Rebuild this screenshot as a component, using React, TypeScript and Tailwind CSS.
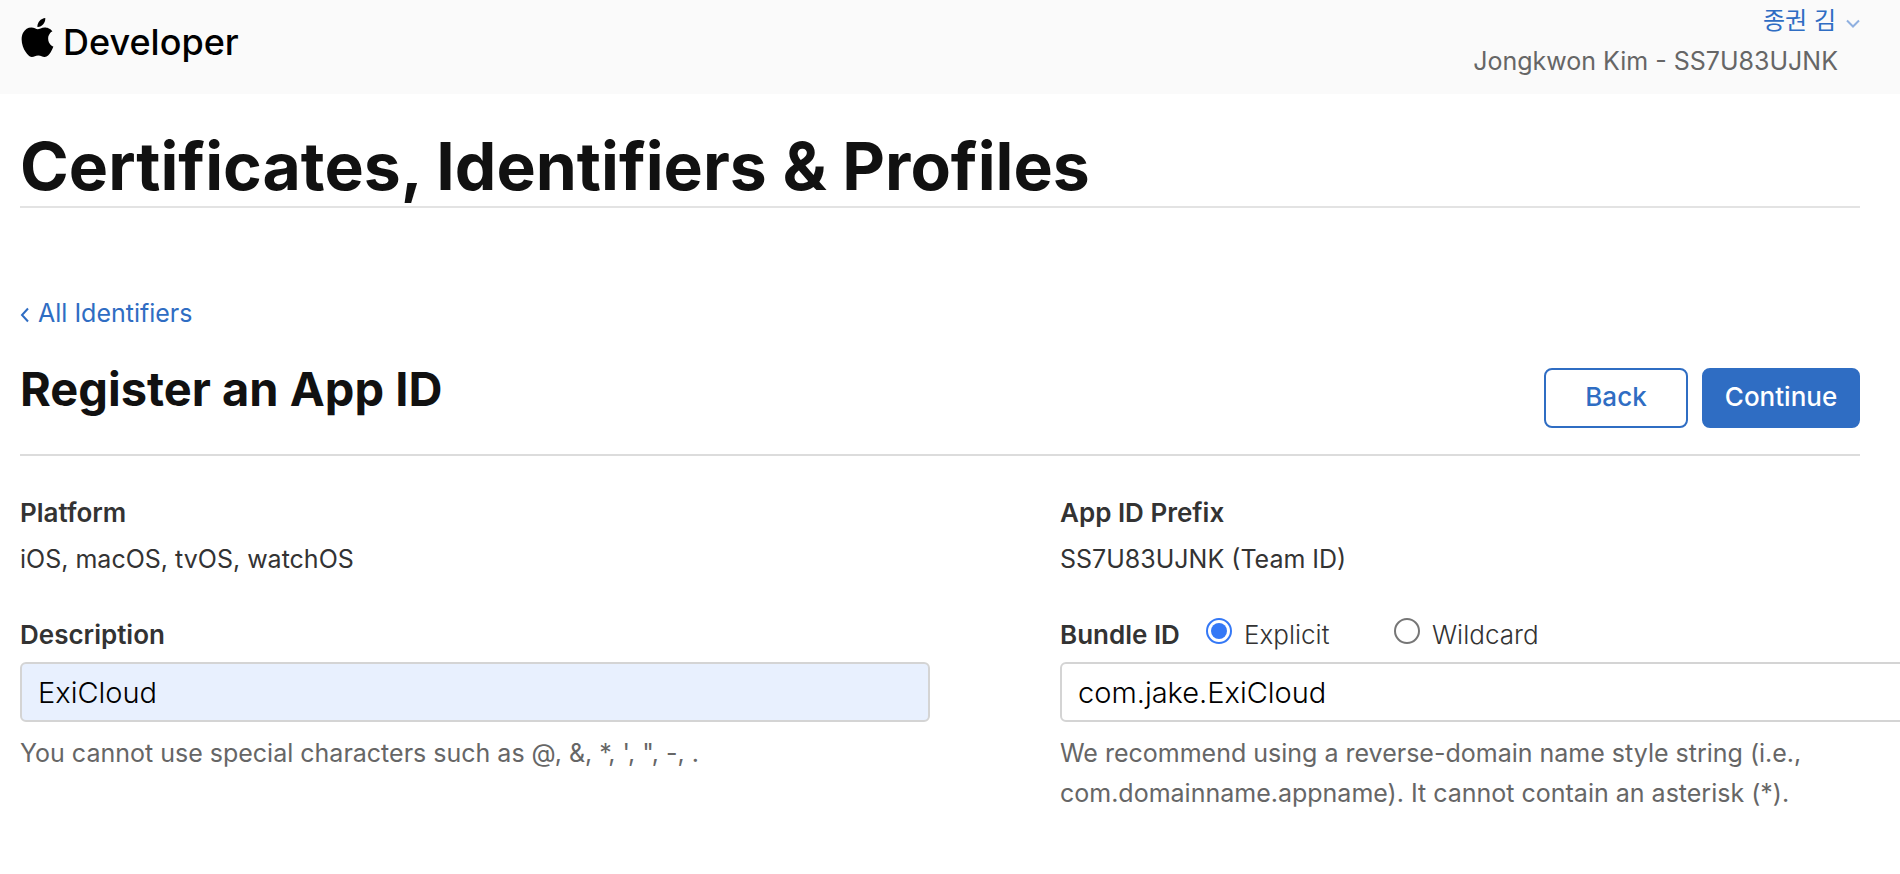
import { useState } from 'react';
import { SiApple } from 'react-icons/si';

const radioClass =
  'mt-[3px] size-[26px] shrink-0 appearance-none rounded-full border-2 border-[#767676] bg-white bg-clip-content p-[3px] checked:border-[#3478f6] checked:bg-[#3478f6]';

const inputClass =
  'mt-[7px] block h-[60px] w-full rounded-md border-2 border-[#d4d4d4] px-4 text-[29px] font-light text-black outline-none';

const labelClass = 'text-[26px] leading-[40px] font-semibold';

const buttonClass = 'h-[60px] rounded-lg border-2 border-[#2f6dc3] pb-[2px]';

function Header() {
  return (
    <header className="flex justify-between bg-[#fafafa] pt-px pr-10 pb-[13px] pl-[18px]">
      <a href="#" className="flex items-start gap-[6px] text-black">
        <SiApple className="mt-[17px] size-[39px]" />
        <span className="mt-4 text-[36px] leading-[50px] font-medium">Developer</span>
      </a>
      <div className="flex flex-col items-end">
        <button type="button" className="flex h-10 items-center gap-[10px] text-[24px] text-[#2f6dc3]">
          종권 김
          <svg width="14" height="9" viewBox="0 0 14 9" fill="none" stroke="#8fb0e0" strokeWidth="2" className="mt-1">
            <path d="M1 1.5l6 6 6-6" />
          </svg>
        </button>
        <span className="pr-[22px] text-[#666]">Jongkwon Kim - SS7U83UJNK</span>
      </div>
    </header>
  );
}

export default function App() {
  const [description, setDescription] = useState('ExiCloud');
  const [bundleId, setBundleId] = useState('com.jake.ExiCloud');
  const [bundleType, setBundleType] = useState('explicit');

  return (
    <div className="min-h-screen overflow-x-hidden bg-white font-['Inter','Noto_Sans_CJK_KR',sans-serif] text-[25px] leading-[40px] text-[#333]">
      <Header />

      <main>
        <div className="mr-10 ml-5">
          <h1 className="border-b-2 border-[#e3e3e3] pt-8 text-[66px] leading-[80px] font-bold text-[#111]">
            Certificates, Identifiers &amp; Profiles
          </h1>

          <a href="#" className="mt-[85px] flex w-fit items-center gap-2 text-[#2f6dc3]">
            <svg width="10" height="16" viewBox="0 0 10 16" fill="none" stroke="currentColor" strokeWidth="2" className="mt-1">
              <path d="M8 1.5L2 8l6 6.5" />
            </svg>
            All Identifiers
          </a>

          <div className="mt-[35px] flex items-start justify-between border-b-2 border-[#dcdcdc] pb-[26px]">
            <h2 className="text-[47px] leading-[42px] font-bold text-[#111]">Register an App ID</h2>
            <div className="flex gap-[14px] text-[26px] font-medium">
              <button type="button" className={`${buttonClass} w-36 bg-white text-[#2f6dc3]`}>
                Back
              </button>
              <button type="submit" form="register" className={`${buttonClass} w-[158px] bg-[#2f6dc3] text-white`}>
                Continue
              </button>
            </div>
          </div>
        </div>

        {/* The right column runs past the edge of the window */}
        <form
          id="register"
          onSubmit={(e) => e.preventDefault()}
          className="-mr-[70px] ml-5 grid grid-cols-2 gap-x-[130px] pt-[37px]"
        >
          <section>
            <h3 className={labelClass}>Platform</h3>
            <p className="mt-[6px]">iOS, macOS, tvOS, watchOS</p>

            <label htmlFor="description" className={`${labelClass} mt-9 block`}>
              Description
            </label>
            <input
              id="description"
              type="text"
              value={description}
              onChange={(e) => setDescription(e.target.value)}
              className={`${inputClass} bg-[#e8f0fe]`}
            />
            <p className="mt-[11px] text-[#666]">
              You cannot use special characters such as @, &amp;, *, ', ", -, .
            </p>
          </section>

          <section>
            <h3 className={labelClass}>App ID Prefix</h3>
            <p className="mt-[6px]">SS7U83UJNK (Team ID)</p>

            <div className="mt-9 flex items-center text-[26px]">
              <label htmlFor="bundle-id" className={`${labelClass} w-[146px]`}>
                Bundle ID
              </label>
              <label className="flex w-[188px] gap-3 font-light">
                <input
                  type="radio"
                  name="bundle-type"
                  className={radioClass}
                  checked={bundleType === 'explicit'}
                  onChange={() => setBundleType('explicit')}
                />
                Explicit
              </label>
              <label className="flex gap-3 font-light">
                <input
                  type="radio"
                  name="bundle-type"
                  className={radioClass}
                  checked={bundleType === 'wildcard'}
                  onChange={() => setBundleType('wildcard')}
                />
                Wildcard
              </label>
            </div>
            <input
              id="bundle-id"
              type="text"
              value={bundleId}
              onChange={(e) => setBundleId(e.target.value)}
              className={`${inputClass} bg-white`}
            />
            <p className="mt-[11px] max-w-[780px] text-[#666]">
              We recommend using a reverse-domain name style string (i.e., com.domainname.appname). It cannot contain an
              asterisk (*).
            </p>
          </section>
        </form>
      </main>
    </div>
  );
}
